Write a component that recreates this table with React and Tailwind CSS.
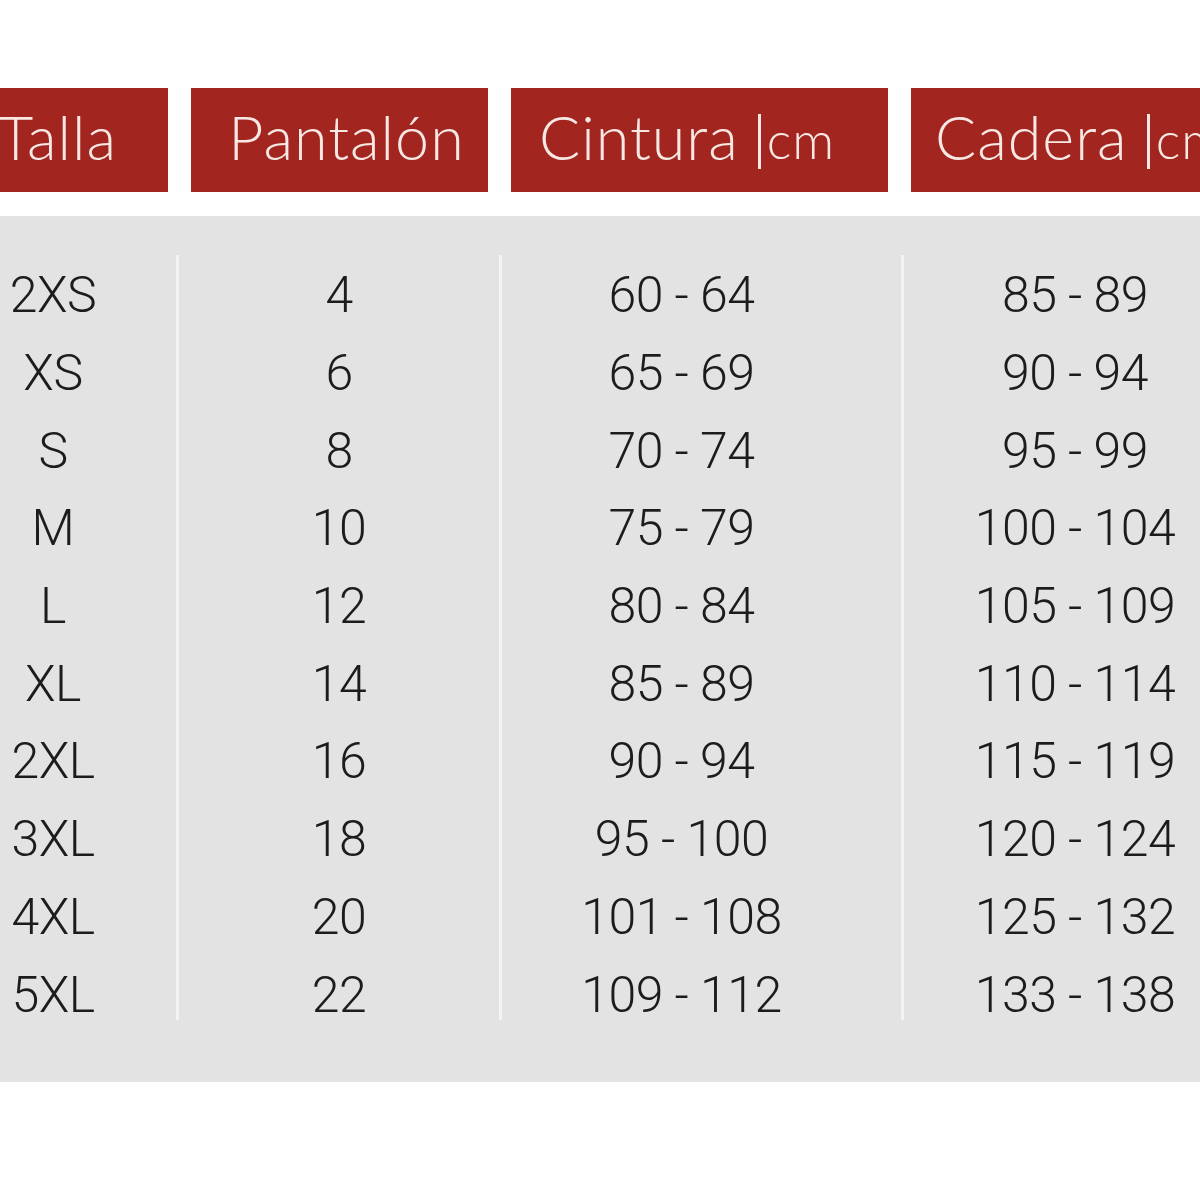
import React from 'react';

const rows = [
    ['2XS', '4', '60 - 64', '85 - 89'],
    ['XS', '6', '65 - 69', '90 - 94'],
    ['S', '8', '70 - 74', '95 - 99'],
    ['M', '10', '75 - 79', '100 - 104'],
    ['L', '12', '80 - 84', '105 - 109'],
    ['XL', '14', '85 - 89', '110 - 114'],
    ['2XL', '16', '90 - 94', '115 - 119'],
    ['3XL', '18', '95 - 100', '120 - 124'],
    ['4XL', '20', '101 - 108', '125 - 132'],
    ['5XL', '22', '109 - 112', '133 - 138'],
];

const headFont = { fontFamily: 'Lato, "Open Sans", sans-serif' };

/* one body column: the cells of a given index, stacked; the divider stops a bit short */
function Column({ index, className }) {
    return (
        <div className={`h-[765px] pt-[2px] flex flex-col ${className}`}>
            {rows.map((r) => (
                <div key={r[0]} className="h-[77.7px] shrink-0 flex items-center justify-center">
                    {r[index]}
                </div>
            ))}
        </div>
    );
}

export default function App() {
    return (
        <div className="w-[1200px] h-[1200px] bg-white overflow-hidden">
            {/* header boxes */}
            <div
                className="flex gap-[23px] pt-[88px] text-[#f7e8e4] font-light text-[61px] tracking-[1px] leading-none"
                style={headFont}
            >
                <div className="w-[168px] h-[104px] shrink-0 bg-[#a2251f] flex items-center overflow-hidden">
                    <span className="ml-[-2px] mb-[8px]">Talla</span>
                </div>
                <div className="w-[297px] h-[104px] shrink-0 bg-[#a2251f] flex items-center justify-center pl-[14px]">
                    <span className="mb-[8px]">Pantalón</span>
                </div>
                <div className="w-[377px] h-[104px] shrink-0 bg-[#a2251f] flex items-center pl-[28px] whitespace-nowrap">
                    <span className="mb-[8px]">Cintura</span>
                    <span className="ml-[19px] w-[3px] h-[55px] bg-[#f7e8e4] mt-[2px]" />
                    <span className="text-[52px] tracking-[1px] ml-[6px] mb-[2px]">cm</span>
                </div>
                <div className="flex-1 min-w-0 h-[104px] bg-[#a2251f] flex items-center pl-[24px] whitespace-nowrap overflow-hidden">
                    <span className="mb-[8px]">Cadera</span>
                    <span className="ml-[19px] w-[3px] h-[55px] shrink-0 bg-[#f7e8e4] mt-[2px]" />
                    <span className="text-[52px] tracking-[1px] ml-[6px] mb-[2px]">cm</span>
                </div>
            </div>

            {/* body panel */}
            <div
                className="mt-[24px] h-[866px] bg-[#e3e3e3] pt-[39px] flex items-start text-[50px] font-light text-[#1c1c1c] tracking-[-0.5px]"
                style={{ fontFamily: 'Roboto, "Liberation Sans", Arial, sans-serif' }}
            >
                <Column index={0} className="w-[176px] pr-[70px]" />
                <Column index={1} className="w-[323px] border-l-[3px] border-[#f4f4f4]" />
                <Column index={2} className="w-[402px] pr-[40px] border-l-[3px] border-[#f4f4f4]" />
                <Column index={3} className="flex-1 pl-[46px] border-l-[3px] border-[#f4f4f4]" />
            </div>
        </div>
    );
}
